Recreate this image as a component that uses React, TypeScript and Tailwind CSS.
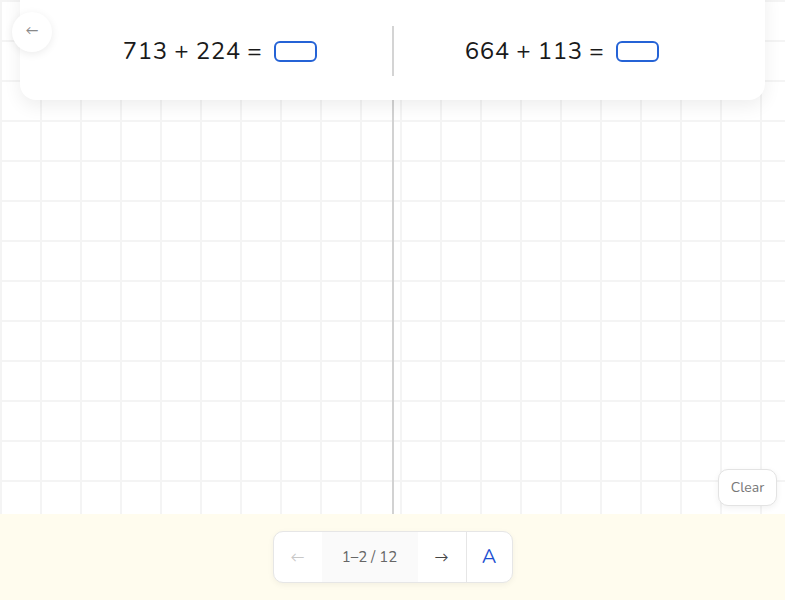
import React from "react";

const font = { fontFamily: "Nunito, Lato, 'Noto Sans', sans-serif" };

function Equation({ a, b, className }: { a: string; b: string; className: string }) {
  return (
    <div className={className}>
      <span className="text-[24px] leading-none tracking-[0.5px] text-[#1a1a1a]">
        {a} + {b} =
      </span>
      <span className="ml-3 h-[21px] w-[43px] rounded-[6px] border-2 border-[#2563d6] bg-white" />
    </div>
  );
}

export default function App() {
  return (
    <div className="relative h-[600px] w-[800px] overflow-hidden bg-white" style={font}>
      <div className="flex h-[600px] w-[785px] flex-col">
        {/* canvas */}
        <div className="relative flex h-[514px] bg-white bg-[linear-gradient(to_right,#f4f4f4_2px,transparent_2px),linear-gradient(to_bottom,#f4f4f4_2px,transparent_2px)] bg-size-[40px_40px]">
          <div className="w-[392px]" />
          <div className="w-[2px] bg-[#d2d2d2]" />
          <div className="flex-1" />

          {/* top card */}
          <div className="absolute left-[20px] top-[-20px] flex h-[120px] w-[745px] items-end rounded-[16px] bg-white pb-[24px] shadow-[0_6px_18px_rgba(0,0,0,0.07)]">
            <div className="flex h-[50px] w-full items-center">
              <Equation a="713" b="224" className="flex w-[372px] items-center justify-center pl-[28px]" />
              <div className="h-[50px] w-[2px] bg-[#d4d4d4]" />
              <Equation a="664" b="113" className="flex flex-1 items-center justify-center pr-[35px]" />
            </div>
          </div>

          {/* back button */}
          <button className="absolute left-[12px] top-[12px] flex h-[40px] w-[40px] items-center justify-center rounded-full bg-white text-[13px] text-[#888] shadow-[0_2px_8px_rgba(0,0,0,0.08)]">
            ←
          </button>

          {/* clear */}
          <button className="absolute bottom-[8px] right-[8px] flex h-[37px] w-[59px] items-center justify-center rounded-[10px] border border-[#e3e3e3] bg-white text-[14px] text-[#777] shadow-[0_2px_6px_rgba(0,0,0,0.06)]">
            Clear
          </button>
        </div>

        {/* bottom bar */}
        <div className="flex flex-1 items-center justify-center bg-[#fffcee]">
          <div className="flex h-[52px] w-[240px] overflow-hidden rounded-[10px] border border-[#e6e6e6] bg-white shadow-[0_2px_6px_rgba(0,0,0,0.05)]">
            <div className="flex w-[48px] items-center justify-center text-[14px] text-[#c8c8c8]">←</div>
            <div className="flex w-[96px] items-center justify-center bg-[#fafafa] text-[15px] text-[#666]">1–2 / 12</div>
            <div className="flex w-[48px] items-center justify-center text-[14px] text-[#444]">→</div>
            <div className="w-px bg-[#e6e6e6]" />
            <div className="flex flex-1 items-center justify-center text-[20px] text-[#1d4fd1]">A</div>
          </div>
        </div>
      </div>
    </div>
  );
}
